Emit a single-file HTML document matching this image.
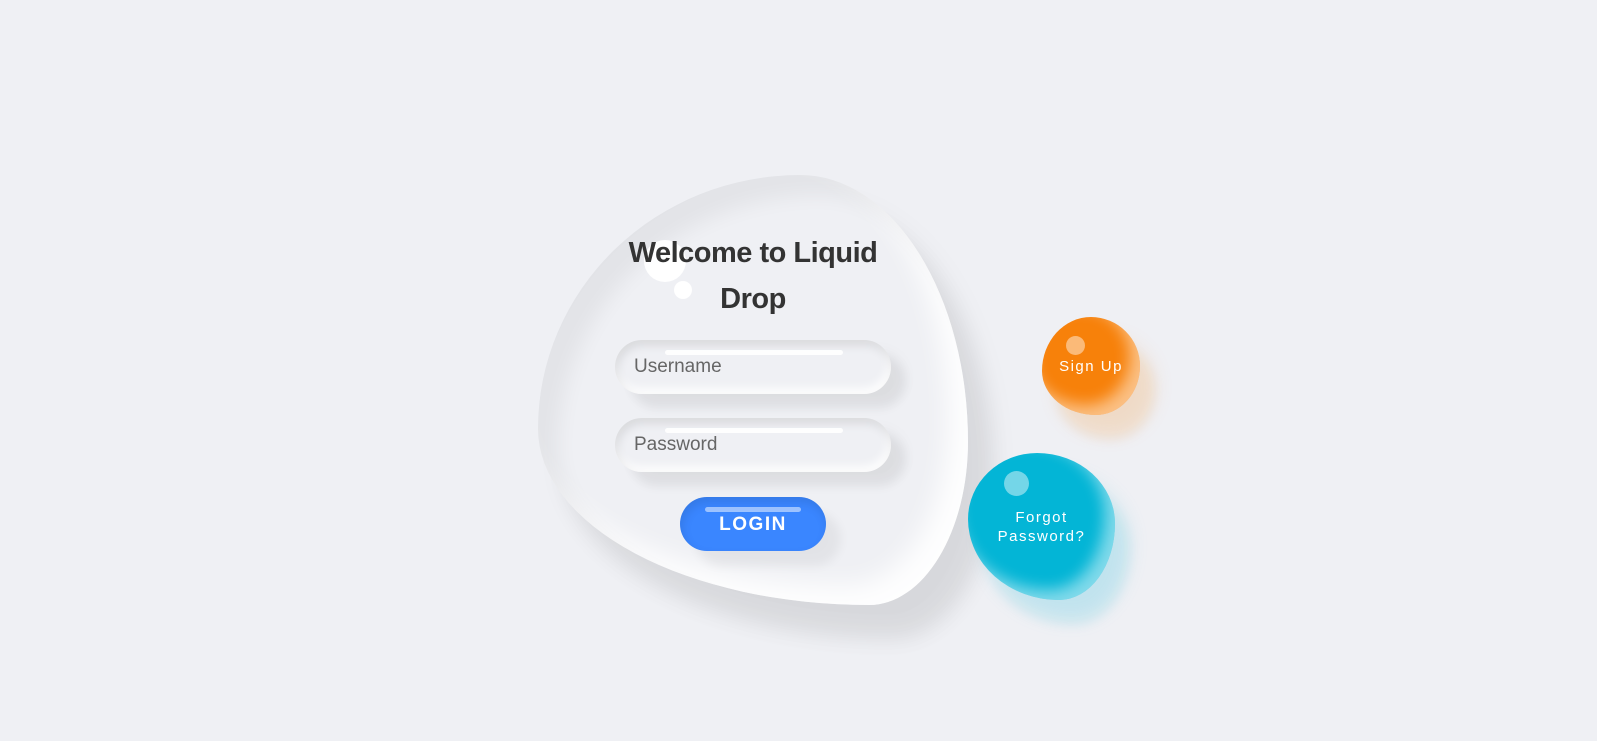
<!DOCTYPE html>
<html><head><meta charset="utf-8"><style>
*{margin:0;padding:0;box-sizing:border-box}
body{width:1597px;height:741px;background:#eff0f4;font-family:"Liberation Sans",sans-serif;position:relative;overflow:hidden}
.card{position:absolute;left:538px;top:175px;width:430px;height:430px;border-radius:61% 39% 23% 77%/59% 62% 38% 41%;background:#eff0f4;
box-shadow:inset 20px 20px 20px rgba(0,0,0,.05),25px 35px 20px rgba(0,0,0,.05),25px 30px 30px rgba(0,0,0,.05),inset -20px -20px 25px rgba(255,255,255,.9)}
.d1{position:absolute;left:644px;top:240px;width:42px;height:42px;border-radius:50%;background:#fff;opacity:.95}
.d2{position:absolute;left:674px;top:281px;width:18px;height:18px;border-radius:50%;background:#fff;opacity:.95}
h2{position:absolute;left:590px;top:230px;width:326px;text-align:center;font-size:29px;line-height:46px;color:#333;font-weight:bold;letter-spacing:-.5px}
.inp{position:absolute;left:615px;width:276px;height:54px;border-radius:27px;background:#eff0f4;
box-shadow:inset 2px 5px 10px rgba(0,0,0,.1),inset -2px -5px 10px rgba(255,255,255,1),15px 15px 10px rgba(0,0,0,.05),15px 10px 15px rgba(0,0,0,.03);
font-size:19px;color:#666;padding:16px 0 0 19px}
.inp:before{content:"";position:absolute;left:50px;top:10px;width:178px;height:5px;border-radius:3px;background:rgba(255,255,255,.9)}
.btn{position:absolute;left:680px;top:497px;width:146px;height:54px;border-radius:27px;background:#3a86ff;color:#fff;font-weight:bold;font-size:19px;letter-spacing:1.5px;text-align:center;padding-top:17px;
box-shadow:inset 2px 5px 10px rgba(0,0,0,.1),15px 15px 10px rgba(0,0,0,.05)}
.btn:before{content:"";position:absolute;left:25px;top:10px;width:96px;height:5px;border-radius:3px;background:rgba(255,255,255,.5)}
.drop{position:absolute;color:#fff;text-align:center;font-size:15px;letter-spacing:1.5px;display:flex;align-items:center;justify-content:center}
.su{left:1042px;top:317px;width:98px;height:98px;border-radius:50% 50% 45% 55%/55% 50% 50% 45%;background:#f7810a;
box-shadow:15px 25px 10px rgba(247,129,10,.08),15px 20px 20px rgba(247,129,10,.12),inset -10px -10px 15px rgba(255,255,255,.5)}
.fp{left:968px;top:453px;width:147px;height:147px;border-radius:47% 53% 38% 62%/45% 48% 52% 55%;background:#03b5d6;line-height:19px;
box-shadow:15px 25px 10px rgba(3,181,214,.08),15px 20px 20px rgba(3,181,214,.12),inset -10px -10px 15px rgba(255,255,255,.5)}
.dot{position:absolute;border-radius:50%;background:rgba(255,255,255,.45)}
</style></head><body>
<div class="card"></div>
<div class="d1"></div><div class="d2"></div>
<h2>Welcome to Liquid<br>Drop</h2>
<div class="inp" style="top:340px">Username</div>
<div class="inp" style="top:418px">Password</div>
<div class="btn">LOGIN</div>
<div class="drop su">Sign Up<div class="dot" style="left:24px;top:19px;width:19px;height:19px"></div></div>
<div class="drop fp"><span>Forgot<br>Password?</span><div class="dot" style="left:36px;top:18px;width:25px;height:25px"></div></div>
</body></html>
